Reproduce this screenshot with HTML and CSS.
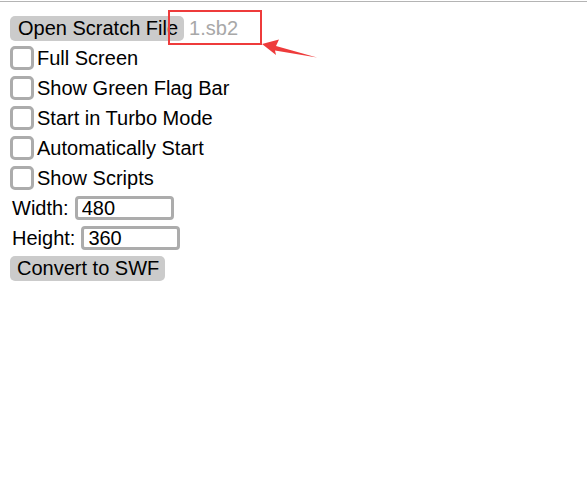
FILE: index.html
```html
<!DOCTYPE html>
<html>
<head>
<meta charset="utf-8">
<link rel="stylesheet" href="styles.css">
</head>
<body>
<div class="topline"></div>
<div class="form">
  <div class="row">
    <button class="btn">Open Scratch File</button>
    <span class="filename">1.sb2</span>
  </div>
  <label class="row"><input type="checkbox" class="cb"><span>Full Screen</span></label>
  <label class="row"><input type="checkbox" class="cb"><span>Show Green Flag Bar</span></label>
  <label class="row"><input type="checkbox" class="cb"><span>Start in Turbo Mode</span></label>
  <label class="row"><input type="checkbox" class="cb"><span>Automatically Start</span></label>
  <label class="row"><input type="checkbox" class="cb"><span>Show Scripts</span></label>
  <div class="row field"><span class="lbl">Width:</span><input class="num" type="text" value="480"></div>
  <div class="row field"><span class="lbl">Height:</span><input class="num" type="text" value="360"></div>
  <div class="row">
    <button class="btn btn-convert">Convert to SWF</button>
  </div>
</div>
<div class="annot-box"></div>
<svg class="annot-arrow" width="70" height="30" viewBox="255 35 70 30">
  <polygon points="262,44 279,39.5 276,46 317,57.5 275,50.5 276,55" fill="#ee3b3b"/>
</svg>
</body>
</html>
```

FILE: styles.css
```css
html, body {
  margin: 0;
  padding: 0;
  background: #ffffff;
}
body {
  font-family: "Liberation Sans", Arial, sans-serif;
  font-size: 20px;
  color: #000;
  position: relative;
  width: 587px;
  height: 489px;
  overflow: hidden;
}
.topline {
  height: 1px;
  margin-top: 1px;
  background: #b4b4b4;
}
.form {
  display: flex;
  flex-direction: column;
  padding: 11px 0 0 10px;
}
.row {
  height: 30px;
  display: flex;
  align-items: center;
}
.btn {
  font-family: "Liberation Sans", Arial, sans-serif;
  font-size: 20px;
  color: #000;
  background: #cbcbcb;
  border: none;
  border-radius: 5px;
  height: 25px;
  padding: 0 6px 0 8px;
  margin: 0;
  line-height: 25px;
}
.filename {
  color: #a8a8a8;
  margin-left: 5px;
}
.cb {
  appearance: none;
  -webkit-appearance: none;
  width: 24px;
  height: 24px;
  box-sizing: border-box;
  border: 3px solid #acacac;
  border-radius: 5px;
  background: #fff;
  margin: 0 3px 0 0;
}
.field .lbl {
  margin-left: 2px;
}
.num {
  font-family: "Liberation Sans", Arial, sans-serif;
  font-size: 20px;
  color: #000;
  width: 99px;
  height: 24px;
  box-sizing: border-box;
  border: 3px solid #acacac;
  border-radius: 4px;
  padding: 0 0 0 4px;
  margin: 0 0 0 6px;
  outline: none;
}
.btn-convert {
  padding: 0 6px 0 7px;
}
.annot-box {
  position: absolute;
  left: 168px;
  top: 10px;
  width: 90px;
  height: 31px;
  border: 2px solid #ee3b3b;
}
.annot-arrow {
  position: absolute;
  left: 255px;
  top: 35px;
}
```
